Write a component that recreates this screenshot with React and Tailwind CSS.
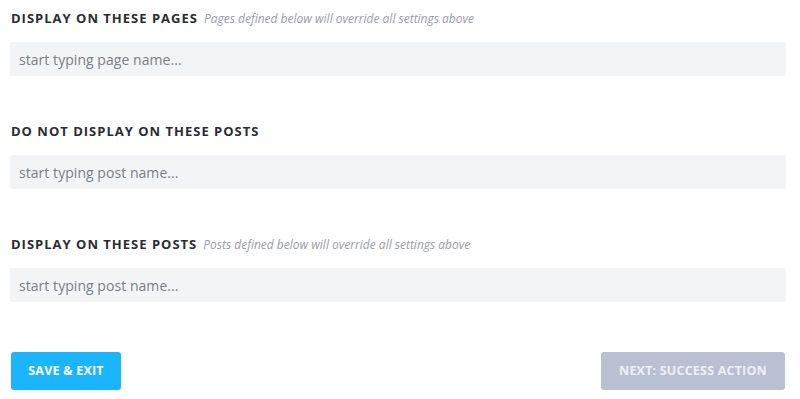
import React from "react";

function Section({ title, note, placeholder, last }) {
  return (
    <div className={last ? "" : "mb-[47px]"}>
      <div className="flex items-baseline h-[16px] leading-[16px] mb-[16px] pl-[1px]">
        <span className="text-[13px] font-bold uppercase tracking-[1px] text-[#2b2c33]">{title}</span>
        {note && (
          <span className="ml-[6px] text-[12px] italic text-[#9a9ca6]">{note}</span>
        )}
      </div>
      <div className="h-[34px] bg-[#f3f4f6] rounded-[2px] flex items-center pl-[9px] text-[14px] text-[#7b7e86] tracking-[0.05px]">
        {placeholder}
      </div>
    </div>
  );
}

export default function App() {
  return (
    <div
      className="w-[800px] h-[399px] bg-white overflow-hidden pt-[10px] pl-[10px] pr-[14px]"
      style={{ fontFamily: '"Open Sans", "Liberation Sans", sans-serif' }}
    >
      <Section
        title="Display on these pages"
        note="Pages defined below will override all settings above"
        placeholder="start typing page name..."
      />
      <Section title="Do not display on these posts" placeholder="start typing post name..." />
      <Section
        title="Display on these posts"
        note="Posts defined below will override all settings above"
        placeholder="start typing post name..."
        last
      />
      <div className="flex justify-between mt-[50px] pl-[1px] pr-[1px]">
        <button className="h-[38px] w-[110px] rounded-[3px] bg-[#1ab4ff] text-white text-[12.5px] font-bold uppercase tracking-[0.2px]">
          Save &amp; Exit
        </button>
        <button className="h-[38px] w-[184px] rounded-[3px] bg-[#b9c0d3] text-[#eef0f6] text-[12.5px] font-bold uppercase tracking-[0.2px]">
          Next: Success Action
        </button>
      </div>
    </div>
  );
}
